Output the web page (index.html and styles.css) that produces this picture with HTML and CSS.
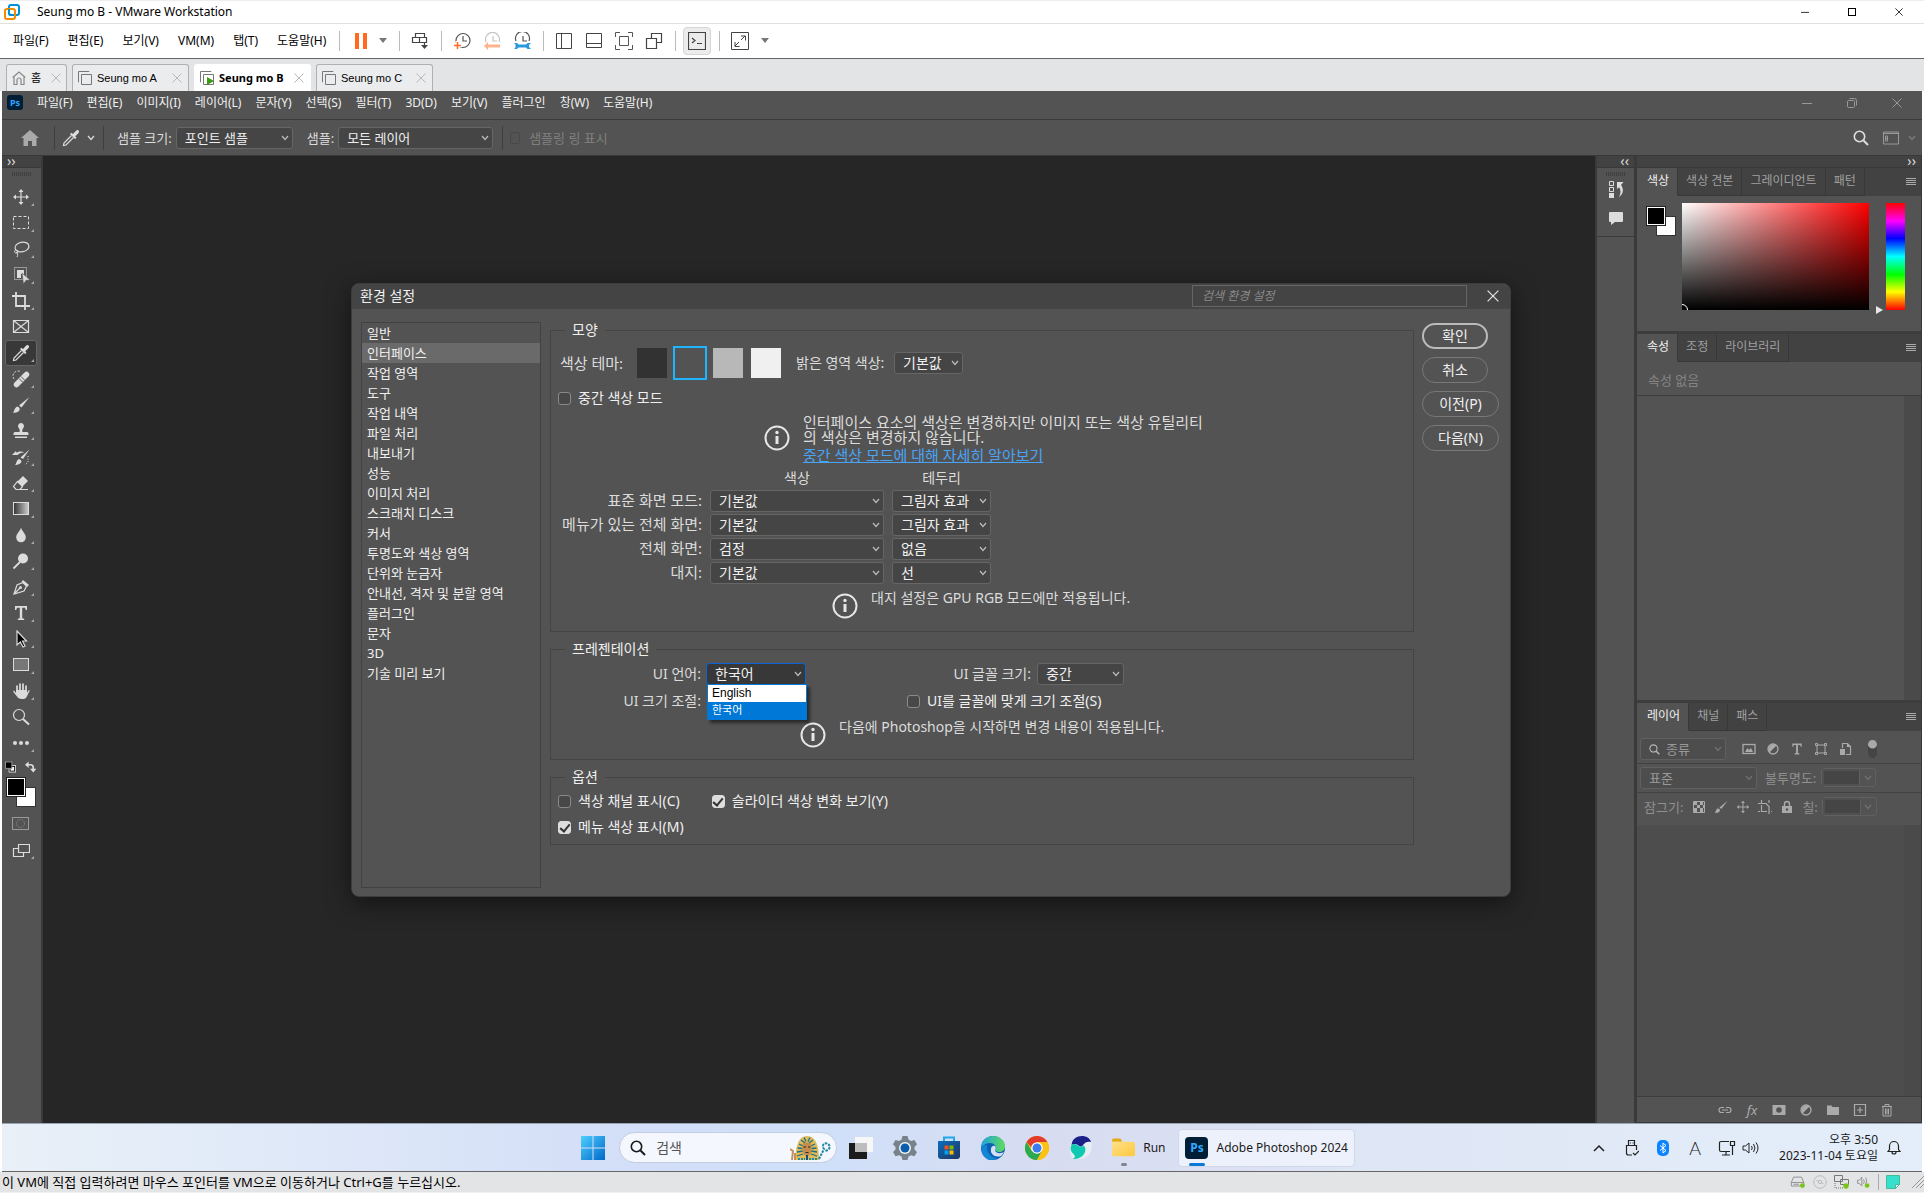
FILE: index.html
```html
<!DOCTYPE html>
<html lang="ko">
<head>
    <meta charset="utf-8">
    <title>Seung mo B - VMware Workstation</title>
    <link rel="stylesheet" href="styles.css">
</head>
<body>
    <!-- icon set -->
    <svg class="defs" aria-hidden="true">
        <defs>
            <linearGradient id="gWin" x1="0" y1="0" x2="1" y2="1"><stop offset="0" stop-color="#4fd0ff"/><stop offset="1" stop-color="#0067c8"/></linearGradient>
            <linearGradient id="gStore" x1="0" y1="0" x2="1" y2="1"><stop offset="0" stop-color="#0a6fc0"/><stop offset="1" stop-color="#20335f"/></linearGradient>
            <linearGradient id="gEdge" x1="0" y1="0" x2="1" y2="0"><stop offset="0" stop-color="#1fa3e0"/><stop offset="1" stop-color="#5fdc5a"/></linearGradient>
            <linearGradient id="gGray" x1="0" y1="0" x2="1" y2="0"><stop offset="0" stop-color="#333"/><stop offset="1" stop-color="#ccc"/></linearGradient>
            <linearGradient id="gFolder" x1="0" y1="0" x2="1" y2="1"><stop offset="0" stop-color="#ffe08a"/><stop offset="1" stop-color="#ffc83c"/></linearGradient>
        </defs>
        <symbol id="vmware" viewBox="0 0 16 16"><rect x="5" y="1" width="10" height="10" rx="2" fill="none" stroke="#0091da" stroke-width="2"/><rect x="1" y="5" width="10" height="10" rx="2" fill="none" stroke="#f38b00" stroke-width="2"/><path d="M5 5v4a2 2 0 0 0 2 2h3" fill="none" stroke="#0091da" stroke-width="2"/></symbol>
        <symbol id="x" viewBox="0 0 10 10"><path d="M.5.5l9 9M9.500.5l-9 9" fill="none" stroke="currentColor"/></symbol>
        <symbol id="min" viewBox="0 0 10 10"><path d="M0 5.500h10" stroke="currentColor"/></symbol>
        <symbol id="max" viewBox="0 0 10 10"><rect x="1.500" y="1.500" width="7" height="7" fill="none" stroke="currentColor"/></symbol>
        <symbol id="restore" viewBox="0 0 10 10"><rect x=".5" y="2.500" width="7" height="7" rx="1" fill="none" stroke="currentColor"/><path d="M2.500.5h5a2 2 0 0 1 2 2v5" fill="none" stroke="currentColor"/></symbol>
        <symbol id="caret" viewBox="0 0 8 5"><path d="M0 0h8L4 5z" fill="#777"/></symbol>
        <symbol id="chev" viewBox="0 0 8 6"><path d="M1 1l3 3.500L7 1" fill="none" stroke="currentColor" stroke-width="1.200"/></symbol>
        <symbol id="pause" viewBox="0 0 12 16"><path d="M0 0h4v16H0zM8 0h4v16H8z" fill="#ff6a1f"/></symbol>
        <symbol id="send" viewBox="0 0 18 18"><path d="M4.500 1.500h9v4h-9zM1.500 5.500h7v5h-7zM8.500 5.500h7v5h-7zM13.500 11v4" fill="none" stroke="#444" stroke-width="1.200"/><path d="M10 13h7l-3.500 4z" fill="#444"/></symbol>
        <symbol id="snap" viewBox="0 0 18 18"><circle cx="10" cy="8.500" r="7" fill="none" stroke="#555" stroke-width="1.200"/><path d="M10 4v5h4" fill="none" stroke="#555" stroke-width="1.200"/><path d="M4.500 9v9M0 13.500h9" stroke="#fff" stroke-width="3.500"/><path d="M4.500 10v7M1 13.500h7" stroke="#ff6a1f" stroke-width="1.500"/></symbol>
        <symbol id="revert" viewBox="0 0 18 18"><path d="M3 10a7 7 0 1 1 13 0M10 4v5h4" fill="none" stroke="#c4c4c4" stroke-width="1.200"/><path d="M1 14l4-4v2.500h12v3H5V18z" fill="#ffb38d"/></symbol>
        <symbol id="manage" viewBox="0 0 18 18"><path d="M3 9a7 7 0 1 1 13 0M10 4v5h4" fill="none" stroke="#555" stroke-width="1.200"/><path d="M1 11h3l1.500 1.500H13l1.500-1.500H18l-2 2v2l2 2h-3.500L13 15.500H5.500L4 17H1l1.500-1.500v-3z" fill="#2a98dd"/></symbol>
        <symbol id="side" viewBox="0 0 18 18"><path d="M1.500 1.500h15v15h-15zM6.500 1.500v15" fill="none" stroke="#444"/></symbol>
        <symbol id="thumbs" viewBox="0 0 18 18"><path d="M1.500 1.500h15v14h-15zM1.500 11.500h15" fill="none" stroke="#444"/></symbol>
        <symbol id="fit" viewBox="0 0 18 18"><path d="M.5 5V.5H5M13 .5h4.500V5M17.500 13v4.500H13M5 17.500H.5V13M4.500 4.500h9v9h-9z" fill="none" stroke="#555"/></symbol>
        <symbol id="unity" viewBox="0 0 18 18"><path d="M6.500 6V1.500h10v9H12M1.500 6.500h10v10h-10z" fill="none" stroke="#444" stroke-width="1.200"/></symbol>
        <symbol id="console" viewBox="0 0 18 18"><path d="M.5.5h17v17H.5zM4 6l3 2.500L4 11M9 11.500h5" fill="none" stroke="#444" stroke-width="1.200"/></symbol>
        <symbol id="expand" viewBox="0 0 18 18"><path d="M.5.5h17v17H.5zM10 4h4.500v4.500M4 10v4.500h4.500M14 4l-4 4M8 10l-4 4" fill="none" stroke="#444"/></symbol>
        <symbol id="house" viewBox="0 0 14 14"><path d="M.7 6.500L7 1l6.300 5.500M2 6v7.500h3V9a2 2 0 0 1 4 0v4.500h3V6" fill="none" stroke="#888" stroke-width="1.200"/></symbol>
        <symbol id="vm" viewBox="0 0 14 14"><path d="M3.500 3.500h10v10h-10zM1 11H.5V.5H11V1" fill="none" stroke="#777"/></symbol>
        <symbol id="vmrun" viewBox="0 0 14 14"><path d="M3.500 3.500h10v10h-10zM1 11H.5V.5H11V1" fill="none" stroke="#777"/><path d="M7 6l7 4-7 4z" fill="#3a9a10"/></symbol>
        <symbol id="home" viewBox="0 0 18 16"><path d="M9 0l9 8h-2.500v8H11v-5H7v5H2.500V8H0z" fill="#aaa"/></symbol>
        <symbol id="search" viewBox="0 0 16 16"><circle cx="6.500" cy="6.500" r="5.200" fill="none" stroke="currentColor" stroke-width="1.600"/><path d="M10.500 10.500l4.500 4.500" stroke="currentColor" stroke-width="2"/></symbol>
        <symbol id="work" viewBox="0 0 16 13"><path d="M.5.500h15v12H.5zM.5 2h15M2.500 4.500h2v5h-2zM2.500 7h2" fill="none" stroke="#999"/></symbol>
        <symbol id="menu" viewBox="0 0 10 8"><path d="M0 .5h10M0 2.500h10M0 4.500h10M0 6.500h10" stroke="#aaa"/></symbol>
        <!-- toolbox -->
        <symbol id="move" viewBox="0 0 18 18"><path d="M9 3v12M3 9h12" stroke="currentColor" stroke-width="1.200"/><path d="M9 1l2.500 3h-5zM9 17l2.500-3h-5zM1 9l3-2.500v5zM17 9l-3-2.500v5z" fill="currentColor"/></symbol>
        <symbol id="marquee" viewBox="0 0 18 18"><rect x="1.500" y="2.500" width="15" height="12" fill="none" stroke="currentColor" stroke-dasharray="3 2"/></symbol>
        <symbol id="lasso" viewBox="0 0 18 18"><ellipse cx="10" cy="7" rx="7" ry="4.800" transform="rotate(-12 10 7)" fill="none" stroke="currentColor" stroke-width="1.200"/><path d="M4 10c-2 0-2 3 0 3s3-2 1-3M4 12c2 1 2 3 1 5" fill="none" stroke="currentColor"/></symbol>
        <symbol id="objsel" viewBox="0 0 18 18"><rect x="2.500" y="1.500" width="12" height="12" fill="none" stroke="currentColor" stroke-dasharray="1 1"/><path d="M5 4h7v4H9v4H5z" fill="currentColor"/><path d="M10 7l8 7-4 .3L11.500 18z" fill="currentColor" stroke="#535353" stroke-width=".5"/></symbol>
        <symbol id="crop" viewBox="0 0 18 18"><path d="M4 0v14h14M0 4h13v14" fill="none" stroke="currentColor" stroke-width="1.800"/></symbol>
        <symbol id="frame" viewBox="0 0 18 18"><path d="M1.500 2.500h15v12h-15zM1.500 2.500l15 12M16.500 2.500l-15 12" fill="none" stroke="currentColor" stroke-width="1.200"/></symbol>
        <symbol id="dropper" viewBox="0 0 18 18"><path d="M9.500 6.500l-7.500 7.500-.5 2.500 2.500-.5 7.500-7.500" fill="none" stroke="currentColor" stroke-width="1.200"/><path d="M8 5l1.300-1.300L11 5l3-3.300c2-1.700 4 .6 2.600 2.400L13.300 7.300 14.500 9 13 10z" fill="currentColor"/></symbol>
        <symbol id="heal" viewBox="0 0 18 18"><path d="M2 9a5 5 0 0 1 7-7" fill="none" stroke="currentColor" stroke-dasharray="2 1.500"/><path d="M4.500 14.500l10-10" stroke="currentColor" stroke-width="5.500" stroke-linecap="round"/><path d="M7 8.500l3.500 3.500M9 6.500l3.500 3.500" stroke="#535353"/></symbol>
        <symbol id="brush" viewBox="0 0 18 18"><path d="M17.500 1L9.500 11.500 7 9.500zM1 16.500c1.500-1 1-3.500 3-5.200 2-1.500 4.500.8 3.500 3-1 2-4 2.800-6.500 2.200z" fill="currentColor"/></symbol>
        <symbol id="stamp" viewBox="0 0 18 18"><path d="M9 1a3.200 3.200 0 0 1 2 5.500c-.8.8-.8 2-.6 3.500H15a1.500 1.500 0 0 1 1.500 1.500V13h-15v-1.500A1.500 1.500 0 0 1 3 10h4.600c.2-1.500.2-2.700-.6-3.500A3.200 3.200 0 0 1 9 1zM3 14.500h12V16H3z" fill="currentColor"/></symbol>
        <symbol id="history" viewBox="0 0 18 18"><path d="M17.500 1.500L11 11 8.500 9.500zM3 17c1.500-1 1-3.500 3-5.500 2-1 4 .8 3.300 2.800C8 16.500 5 17.200 3 17zM0 7l4-4 .5 1.800c3-2 6-1.300 8-.3-2.500 0-5 .5-7 2.500z" fill="currentColor"/><path d="M16 8v6l-3 3" fill="none" stroke="currentColor" stroke-dasharray="1 1.500"/></symbol>
        <symbol id="eraser" viewBox="0 0 18 18"><path d="M11 2l5 5-5.500 5.500-5-5z" fill="currentColor"/><path d="M5.500 7.500l5 5-2.500 3H4l-2.500-3zM8 15.500h8" fill="none" stroke="currentColor" stroke-width="1.200"/></symbol>
        <symbol id="gradient" viewBox="0 0 18 18"><rect x="1.500" y="2.500" width="15" height="12" fill="url(#gGray)" stroke="currentColor"/></symbol>
        <symbol id="drop" viewBox="0 0 18 18"><path d="M9 1.500c1 4 4.800 6 4.800 10a4.800 4.800 0 0 1-9.600 0c0-4 3.800-6 4.800-10z" fill="currentColor"/></symbol>
        <symbol id="dodge" viewBox="0 0 18 18"><circle cx="11" cy="6.500" r="5" fill="currentColor"/><path d="M8 10l-6.500 6.500" stroke="currentColor" stroke-width="1.800"/></symbol>
        <symbol id="pen" viewBox="0 0 18 18"><path d="M2 16L5 7l6-2.500 3.500 3.500L12 13zM2 16l6-6" fill="none" stroke="currentColor" stroke-width="1.200"/><circle cx="8.500" cy="9.500" r="1.500" fill="currentColor"/><path d="M11 2l6 5-2 2-5.500-5z" fill="currentColor"/></symbol>
        <symbol id="type" viewBox="0 0 18 18"><path d="M3 2h12v4h-1.200l-.8-2.200h-2.800v10.400l2 .6V16H5.800v-1.200l2-.6V3.800H5L4.200 6H3z" fill="currentColor"/></symbol>
        <symbol id="pointer" viewBox="0 0 18 18"><path d="M5 1v14l3.300-3L11 17l2-1-2.500-5h4z" fill="#000" stroke="currentColor" stroke-width="1.200"/></symbol>
        <symbol id="rect" viewBox="0 0 18 18"><rect x="1.500" y="2.500" width="15" height="12" fill="#777" stroke="currentColor"/></symbol>
        <symbol id="hand" viewBox="0 0 18 18"><path d="M5 10V4M8 9V2M11 9V2M14 10V4" stroke="currentColor" stroke-width="1.700" stroke-linecap="round"/><path d="M4 8h10.800v3l2-3 1 .5-3 6C14 16.500 12.500 17 10 17c-3 0-4-1-5-2.500l-4-5 1-1L4 11z" fill="currentColor"/></symbol>
        <symbol id="zoom" viewBox="0 0 18 18"><circle cx="7" cy="7" r="5.500" fill="none" stroke="currentColor" stroke-width="1.200"/><path d="M11 11l6 5.500" stroke="currentColor" stroke-width="2"/></symbol>
        <symbol id="dots" viewBox="0 0 18 18"><circle cx="3" cy="9" r="2" fill="currentColor"/><circle cx="9" cy="9" r="2" fill="currentColor"/><circle cx="15" cy="9" r="2" fill="currentColor"/></symbol>
        <symbol id="mini" viewBox="0 0 12 12"><rect x="4.500" y="4.500" width="7" height="7" fill="#fff" stroke="#ddd"/><rect x="5.500" y="5.500" width="5" height="5" fill="#fff" stroke="#000"/><rect x=".5" y=".5" width="7" height="7" fill="#000" stroke="#999"/></symbol>
        <symbol id="swap" viewBox="0 0 12 12"><path d="M3 3.500h3a3 3 0 0 1 3 3V9" fill="none" stroke="currentColor" stroke-width="1.800"/><path d="M0 3.500L4 0v7zM5.500 8h7L9 12z" fill="currentColor"/></symbol>
        <symbol id="mask" viewBox="0 0 18 18"><rect x=".5" y="2.500" width="16" height="12" fill="none" stroke="#999"/><circle cx="8.500" cy="8.500" r="4" fill="none" stroke="#999" stroke-dasharray="1 1.500"/></symbol>
        <symbol id="screen" viewBox="0 0 18 18"><path d="M6.500 3.500h11v8h-11zM6 7.500H1.500v8h10V12" fill="none" stroke="currentColor" stroke-width="1.200"/></symbol>
        <symbol id="histpanel" viewBox="0 0 16 18"><path d="M1.500 1.500h4v4h-4zM1.500 7.500h4v4h-4z" fill="none" stroke="currentColor"/><path d="M1 13h5v5H1z" fill="currentColor"/><path d="M9 2h6.500L13 5c3 4 2.500 9-2 12 2-4 2-7 .2-9.800L9 9z" fill="currentColor"/></symbol>
        <symbol id="comment" viewBox="0 0 16 16"><path d="M2 2h12a1 1 0 0 1 1 1v8a1 1 0 0 1-1 1H7l-4 3v-3H2a1 1 0 0 1-1-1V3a1 1 0 0 1 1-1z" fill="currentColor"/></symbol>
        <!-- layers panel -->
        <symbol id="image" viewBox="0 0 14 14"><rect x="1" y="2.500" width="12" height="9" fill="none" stroke="currentColor" stroke-width="1.300"/><path d="M3 10l2.500-4L7 8l2-2 2 4z" fill="currentColor"/></symbol>
        <symbol id="adjust" viewBox="0 0 14 14"><circle cx="7" cy="7" r="5" fill="none" stroke="currentColor" stroke-width="1.300"/><path d="M3.500 10.500A5 5 0 0 1 10.500 3.500z" fill="currentColor"/></symbol>
        <symbol id="shape" viewBox="0 0 14 14"><path d="M3 3h8v8H3z" fill="none" stroke="currentColor"/><path d="M1.500 1.500h2v2h-2zM10.500 1.500h2v2h-2zM1.500 10.500h2v2h-2zM10.500 10.500h2v2h-2z" fill="#535353" stroke="currentColor"/></symbol>
        <symbol id="smart" viewBox="0 0 14 14"><path d="M4.500 6V1.500h5l3 3v8H8M9.500 1.500v3h3" fill="none" stroke="currentColor" stroke-width="1.200"/><path d="M2 7h5v6H2z" fill="currentColor"/></symbol>
        <symbol id="checker" viewBox="0 0 14 14"><path d="M1.500 1.500h11v11h-11z" fill="none" stroke="currentColor"/><path d="M2 2h3v3H2zM8 2h3v3H8zM5 5h3v3H5zM2 8h3v4H2zM8 8h3v4H8zM11 5h1.500v3H11z" fill="currentColor"/></symbol>
        <symbol id="board" viewBox="0 0 14 14"><path d="M3.500 0v3M0 3.500h8l3 3V14M3.500 5v6.500H9M0 11.500h2M13 11.500h1M11 0v3" fill="none" stroke="currentColor" stroke-width="1.200"/></symbol>
        <symbol id="lock" viewBox="0 0 14 14"><path d="M4.500 6V4a2.500 2.500 0 0 1 5 0v2" fill="none" stroke="currentColor" stroke-width="1.400"/><path d="M2 6h10v7H2z" fill="currentColor"/><circle cx="7" cy="9.500" r="1.200" fill="#535353"/></symbol>
        <symbol id="link" viewBox="0 0 14 14"><path d="M6 4.500H3.500a2.500 2.500 0 0 0 0 5H6M8 4.500h2.500a2.500 2.500 0 0 1 0 5H8M4 7h6" fill="none" stroke="currentColor" stroke-width="1.200"/></symbol>
        <symbol id="addmask" viewBox="0 0 14 14"><path d="M.5 2h13v10H.5z" fill="currentColor"/><circle cx="7" cy="7" r="2.800" fill="#535353"/></symbol>
        <symbol id="folder" viewBox="0 0 14 14"><path d="M1 2.500h4.500l1 1.500H13v8H1z" fill="currentColor"/></symbol>
        <symbol id="new" viewBox="0 0 14 14"><path d="M1.500 1.500h11v11h-11zM7 4v6M4 7h6" fill="none" stroke="currentColor" stroke-width="1.200"/></symbol>
        <symbol id="trash" viewBox="0 0 14 14"><path d="M2 3.500h10M5 3V1.500h4V3M3 4v9h8V4M5.500 5.500v6M8.500 5.500v6M7 5.500v6" fill="none" stroke="currentColor"/></symbol>
        <symbol id="info" viewBox="0 0 26 26"><circle cx="13" cy="13" r="11.500" fill="none" stroke="#e6e6e6" stroke-width="2"/><path d="M11.500 11h3v8h-3z" fill="#e6e6e6"/><circle cx="13" cy="7.500" r="1.700" fill="#e6e6e6"/></symbol>
        <!-- taskbar -->
        <symbol id="win" viewBox="0 0 24 24"><path d="M0 0h11.500v11.500H0zM12.500 0H24v11.500H12.500zM0 12.500h11.500V24H0zM12.500 12.500H24V24H12.500z" fill="url(#gWin)"/></symbol>
        <symbol id="pharaoh" viewBox="0 0 42 26"><path d="M5 25C6 9 9 1 17 1s12 8 12 24z" fill="#e0bc58"/><path d="M7 21l6-2M7 17l6-1M7.500 13l5 .5M9 9l4 2M11 5l4 3M14 2.500l2 4M20 2.500l-2 4M23 5l-4 3M25 9l-4 2M26.500 13l-5 .5M27 17l-6-1M27 21l-6-2" stroke="#1d6f86" stroke-width="1.300"/><path d="M12.500 9c2.500-2 6.500-2 9 0v6c0 4-2.500 6-4.500 6s-4.500-2-4.500-6z" fill="#c58d4c"/><path d="M13.500 12h2.500M18 12h2.500M15.500 17.500h3" stroke="#2b2a33" stroke-width="1.200"/><path d="M16 20h2v5h-2z" fill="#174a7d"/><path d="M8 24h7M19 24h8" stroke="#1e8ba3" stroke-width="2" stroke-dasharray="2 1"/><path d="M2 25l1-9-3-2M5 25v-7" fill="none" stroke="#c3915c" stroke-width="2"/><path d="M29 24l5-10c-3-4 1-7 4-5s2 6-3 7" fill="none" stroke="#2088a0" stroke-width="2" stroke-dasharray="2.500 1"/></symbol>
        <symbol id="taskview" viewBox="0 0 24 24"><path d="M0 7h18v16H0z" fill="#1c1c1c"/><path d="M6 1h18v15H6z" fill="#f7f7f7"/><path d="M6 7h12v9H6z" fill="#bdbdbd"/></symbol>
        <symbol id="gear" viewBox="0 0 24 24"><path d="M9.500 0h5l1 3.500 2.500 1.400 3.500-1L24 8.200 21.500 11v2.500L24 16l-2.500 4.200-3.500-1-2.500 1.400-1 3.400h-5l-1-3.400L6 19.200l-3.500 1L0 16l2.500-2.500V11L0 8.200l2.500-4.300 3.500 1 2.500-1.400z" fill="#78828a"/><circle cx="12" cy="12" r="6" fill="#eef3f8"/><circle cx="12" cy="12" r="4.500" fill="#0a5cad"/></symbol>
        <symbol id="store" viewBox="0 0 24 24"><path d="M7 6V1.500h10V6" fill="none" stroke="#1fa9ea" stroke-width="2"/><path d="M1 5h22v15a3 3 0 0 1-3 3H4a3 3 0 0 1-3-3z" fill="url(#gStore)"/><path d="M7.500 9.500h4v4h-4z" fill="#f25022"/><path d="M12.500 9.500h4v4h-4z" fill="#7fba00"/><path d="M7.500 14.500h4v4h-4z" fill="#00a4ef"/><path d="M12.500 14.500h4v4h-4z" fill="#ffb900"/></symbol>
        <symbol id="edge" viewBox="0 0 24 24"><circle cx="12" cy="12" r="12" fill="#0b62b5"/><path d="M0 12C0 5 5 0 12 0s12 5 12 10c0 4-3 6-6 6-2 0-4-1-3.500-2.500C16 10 13 7 9 7c-4 0-7 2-9 5z" fill="url(#gEdge)"/><path d="M8 24C-1 20-2 9 6 9c-1 5 2 13 10 13-3 2-5 2-8 2z" fill="#1487d4"/><path d="M14 10c2 3-1 4 1 6 3 2 6 1 8 0-1 2-2 3-3 4-6 2-11-2-10-7 0-2 2-4 4-3z" fill="#d6def4"/></symbol>
        <symbol id="chrome" viewBox="0 0 24 24"><circle cx="12" cy="12" r="12" fill="#fbc116"/><path d="M1.600 6a12 12 0 0 1 20.800 0H12v12z" fill="#e33b2e"/><path d="M1.600 6A12 12 0 0 0 12 24l5.200-9H6.800z" fill="#2da94f"/><path d="M12 6h10.400A12 12 0 0 1 12 24l5-9z" fill="#fbc116"/><circle cx="12" cy="12" r="5.800" fill="#fff"/><circle cx="12" cy="12" r="4.500" fill="#3b7ded"/></symbol>
        <symbol id="whale" viewBox="0 0 24 24"><path d="M2 6C8 1 20 3 22 6c3 8-2 17-12 17H4C0 18 1 11 2 6z" fill="#e6eef2"/><path d="M2.500 9C3 3 8 0 13 0c4 0 8 2 9 6-3-1-6 0-8 3-1 2-3 2-5 0-2-1.500-4-1.500-6.500 0z" fill="#1b1f8a"/><path d="M2.500 9c3-2 5-1 7 1 2 1.500 4 1 5-.5 1.500 1 3 4 1 7.500-2 4-6 6-12 6 3-1 3-3 1-5C1.500 15.500 1 12 2.500 9z" fill="#10c9b2"/></symbol>
        <symbol id="explorer" viewBox="0 0 22 20"><path d="M0 3a2 2 0 0 1 2-2h6l2 3H0z" fill="#e8a90c"/><path d="M0 4h20a2 2 0 0 1 2 2v10a2 2 0 0 1-2 2H2a2 2 0 0 1-2-2z" fill="url(#gFolder)"/></symbol>
        <symbol id="up" viewBox="0 0 12 8"><path d="M1 7l5-5 5 5" fill="none" stroke="#222" stroke-width="1.500"/></symbol>
        <symbol id="usb" viewBox="0 0 14 18"><path d="M3.500 6V1.500h6V6M1.500 6.500h10V11M1.500 6v8a2 2 0 0 0 2 2H7M5 4h1M7.500 4h1M8 14l2 2 4-4" fill="none" stroke="#222" stroke-width="1.200"/></symbol>
        <symbol id="bt" viewBox="0 0 12 16"><rect width="12" height="16" rx="5" fill="#0a84ff"/><path d="M3 5.500l6 5-3 2.500V3l3 2.500-6 5" fill="none" stroke="#fff"/></symbol>
        <symbol id="net" viewBox="0 0 18 16"><path d="M11 1.500H3a1.500 1.500 0 0 0-1.500 1.500v7A1.500 1.500 0 0 0 3 11.500h9M8 12v3M4 15h8M12.500 1.500h4v4h-4zM14.500 6v9" fill="none" stroke="#222" stroke-width="1.200"/></symbol>
        <symbol id="vol" viewBox="0 0 18 14"><path d="M1 5h2.500L7 2v10L3.500 9H1z" fill="none" stroke="#222"/><path d="M9.500 5q1.500 2 0 4M11.500 3q3 4 0 8M14 1.500q4 5.500 0 11" fill="none" stroke="#222"/></symbol>
        <symbol id="bell" viewBox="0 0 14 16"><path d="M1 11.500l1.500-2V6a4.500 4.500 0 0 1 9 0v3.500l1.500 2zM5 12a2 2 0 0 0 4 0" fill="none" stroke="#222" stroke-width="1.200"/></symbol>
        <symbol id="disk" viewBox="0 0 18 14"><path d="M1.500 7.500L4 1.500h9l2.500 6v4h-14zM1.500 7.500h14M4 9.500h6" fill="none" stroke="#888"/><circle cx="14" cy="11" r="2.700" fill="#79c516"/></symbol>
        <symbol id="cd" viewBox="0 0 14 14"><circle cx="7" cy="7" r="6.300" fill="none" stroke="#bbb"/><circle cx="7" cy="7" r="1.700" fill="none" stroke="#bbb"/><path d="M3.500 5.500l2 .7M8.500 8l2 .7" stroke="#bbb"/></symbol>
        <symbol id="lan" viewBox="0 0 16 14"><path d="M.5.500h8v6h-8zM6.500 4.500h8v5h-8z" fill="#e3e4e6" stroke="#777"/><path d="M1 8v5h9" fill="none" stroke="#777" stroke-dasharray="1 1"/><circle cx="12" cy="11" r="2.700" fill="#79c516"/></symbol>
        <symbol id="snd" viewBox="0 0 16 14"><path d="M.5 5h2l3-3.500v10l-3-3h-2zM7.500 4q1.500 2.500 0 5M10 2q2 4 0 7" fill="none" stroke="#888"/><circle cx="11.500" cy="11" r="2.700" fill="#79c516"/></symbol>
        <symbol id="note" viewBox="0 0 14 14"><path d="M.5.500h13v9l-4 4h-9z" fill="#35e0cd" stroke="#4b9"/><path d="M13.500 9.500h-4v4z" fill="#fff" stroke="#4b9"/></symbol>
        <symbol id="grip" viewBox="0 0 12 12"><path d="M0 12L12 0M4 12l8-8M8 12l4-4" stroke="#999"/></symbol>
    </svg>

    <header class="titlebar">
        <svg class="i16"><use href="#vmware"/></svg>
        <span class="caption">Seung mo B - VMware Workstation</span>
        <button class="winbtn" aria-label="최소화"><svg class="i8"><use href="#min"/></svg></button>
        <button class="winbtn" aria-label="최대화"><svg class="i10"><use href="#max"/></svg></button>
        <button class="winbtn" aria-label="닫기"><svg class="i8"><use href="#x"/></svg></button>
    </header>

    <nav class="vmbar">
        <div class="vmmenu">
            <a href="#">파일(F)</a><a href="#">편집(E)</a><a href="#">보기(V)</a><a href="#">VM(M)</a><a href="#">탭(T)</a><a href="#">도움말(H)</a>
        </div>
        <div class="vmgroup"><svg class="pause"><use href="#pause"/></svg><svg class="caret"><use href="#caret"/></svg></div>
        <div class="vmgroup"><svg class="i18"><use href="#send"/></svg></div>
        <div class="vmgroup"><svg class="i18"><use href="#snap"/></svg><svg class="i18"><use href="#revert"/></svg><svg class="i18"><use href="#manage"/></svg></div>
        <div class="vmgroup"><svg class="i18"><use href="#side"/></svg><svg class="i18"><use href="#thumbs"/></svg><svg class="i18"><use href="#fit"/></svg><svg class="i18"><use href="#unity"/></svg></div>
        <div class="vmgroup tight"><button class="console" aria-label="콘솔"><svg class="i18"><use href="#console"/></svg></button></div>
        <div class="vmgroup"><svg class="i18"><use href="#expand"/></svg><svg class="caret"><use href="#caret"/></svg></div>
    </nav>

    <nav class="vmtabs">
        <a href="#" class="vmtab home"><svg class="i14"><use href="#house"/></svg><span>홈</span><svg class="i10"><use href="#x"/></svg></a>
        <a href="#" class="vmtab"><svg class="i14"><use href="#vm"/></svg><span>Seung mo A</span><svg class="i10"><use href="#x"/></svg></a>
        <a href="#" class="vmtab active"><svg class="i14"><use href="#vmrun"/></svg><span>Seung mo B</span><svg class="i10"><use href="#x"/></svg></a>
        <a href="#" class="vmtab"><svg class="i14"><use href="#vm"/></svg><span>Seung mo C</span><svg class="i10"><use href="#x"/></svg></a>
    </nav>

    <main class="guest">
        <div class="psmenu">
            <span class="pslogo">Ps</span>
            <a href="#">파일(F)</a><a href="#">편집(E)</a><a href="#">이미지(I)</a><a href="#">레이어(L)</a><a href="#">문자(Y)</a><a href="#">선택(S)</a><a href="#">필터(T)</a><a href="#">3D(D)</a><a href="#">보기(V)</a><a href="#">플러그인</a><a href="#">창(W)</a><a href="#">도움말(H)</a>
            <div class="pswin">
                <svg class="i10"><use href="#min"/></svg><svg class="i10"><use href="#restore"/></svg><svg class="i10"><use href="#x"/></svg>
            </div>
        </div>

        <div class="options">
            <div class="optgroup first"><svg class="i18"><use href="#home"/></svg></div>
            <div class="optgroup"><svg class="i18"><use href="#dropper"/></svg><svg class="chev"><use href="#chev"/></svg></div>
            <div class="optgroup">
                <label for="sampleSize">샘플 크기:</label>
                <span class="sel w117"><select id="sampleSize"><option>포인트 샘플</option></select><svg><use href="#chev"/></svg></span>
                <label for="sample" class="second">샘플:</label>
                <span class="sel w155"><select id="sample"><option>모든 레이어</option></select><svg><use href="#chev"/></svg></span>
            </div>
            <label class="ring"><input type="checkbox" disabled>샘플링 링 표시</label>
            <div class="optright"><svg class="i16 mag"><use href="#search"/></svg><svg class="i16"><use href="#work"/></svg><svg class="chev dim"><use href="#chev"/></svg></div>
        </div>

        <div class="workspace">
            <aside class="toolbox">
                <div class="strip">››</div>
                <div class="grip"></div>
                <button class="tool"><svg><use href="#move"/></svg></button>
                <button class="tool"><svg><use href="#marquee"/></svg></button>
                <button class="tool"><svg><use href="#lasso"/></svg></button>
                <button class="tool"><svg><use href="#objsel"/></svg></button>
                <button class="tool"><svg><use href="#crop"/></svg></button>
                <button class="tool single"><svg><use href="#frame"/></svg></button>
                <button class="tool on"><svg><use href="#dropper"/></svg></button>
                <button class="tool"><svg><use href="#heal"/></svg></button>
                <button class="tool"><svg><use href="#brush"/></svg></button>
                <button class="tool"><svg><use href="#stamp"/></svg></button>
                <button class="tool"><svg><use href="#history"/></svg></button>
                <button class="tool"><svg><use href="#eraser"/></svg></button>
                <button class="tool"><svg><use href="#gradient"/></svg></button>
                <button class="tool"><svg><use href="#drop"/></svg></button>
                <button class="tool"><svg><use href="#dodge"/></svg></button>
                <button class="tool"><svg><use href="#pen"/></svg></button>
                <button class="tool"><svg><use href="#type"/></svg></button>
                <button class="tool"><svg><use href="#pointer"/></svg></button>
                <button class="tool"><svg><use href="#rect"/></svg></button>
                <button class="tool"><svg><use href="#hand"/></svg></button>
                <button class="tool single"><svg><use href="#zoom"/></svg></button>
                <button class="tool"><svg><use href="#dots"/></svg></button>
                <div class="minirow"><svg><use href="#mini"/></svg><svg><use href="#swap"/></svg></div>
                <div class="swatch"><i class="bg"></i><i class="fg"></i></div>
                <button class="tool single"><svg><use href="#mask"/></svg></button>
                <button class="tool"><svg><use href="#screen"/></svg></button>
            </aside>

            <section class="canvas"></section>

            <aside class="iconcol">
                <div class="strip right">‹‹</div>
                <div class="iconbox">
                    <div class="grip"></div>
                    <svg class="i18"><use href="#histpanel"/></svg>
                    <svg class="i16"><use href="#comment"/></svg>
                </div>
            </aside>

            <aside class="panels">
                <div class="strip right">››</div>
                <section class="panel color">
                    <div class="ptabs"><a href="#" class="on">색상</a><a href="#">색상 견본</a><a href="#">그레이디언트</a><a href="#">패턴</a><svg><use href="#menu"/></svg></div>
                    <div class="picker">
                        <div class="swatch"><i class="bg"></i><i class="fg"></i></div>
                        <div class="field"><i></i></div>
                        <div class="hue"></div>
                    </div>
                </section>
                <section class="panel props">
                    <div class="ptabs"><a href="#" class="on">속성</a><a href="#">조정</a><a href="#">라이브러리</a><svg><use href="#menu"/></svg></div>
                    <p class="none">속성 없음</p>
                    <div class="scroll"></div>
                </section>
                <section class="panel layers">
                    <div class="ptabs"><a href="#" class="on">레이어</a><a href="#">채널</a><a href="#">패스</a><svg><use href="#menu"/></svg></div>
                    <div class="lrow filter">
                        <span class="sel off w86"><svg class="mag"><use href="#search"/></svg><select aria-label="필터" disabled><option>종류</option></select><svg><use href="#chev"/></svg></span>
                        <div class="licons"><svg><use href="#image"/></svg><svg><use href="#adjust"/></svg><svg><use href="#type"/></svg><svg><use href="#shape"/></svg><svg><use href="#smart"/></svg></div>
                        <span class="toggle"></span>
                    </div>
                    <div class="lrow blend">
                        <span class="sel off w117"><select aria-label="혼합 모드" disabled><option>표준</option></select><svg><use href="#chev"/></svg></span>
                        <label for="opacity">불투명도:</label>
                        <span class="num"><input id="opacity" type="text" disabled><svg><use href="#chev"/></svg></span>
                    </div>
                    <div class="lrow locks">
                        <span>잠그기:</span>
                        <div class="licons tight"><svg><use href="#checker"/></svg><svg><use href="#brush"/></svg><svg><use href="#move"/></svg><svg><use href="#board"/></svg><svg><use href="#lock"/></svg></div>
                        <label for="fill">칠:</label>
                        <span class="num"><input id="fill" type="text" disabled><svg><use href="#chev"/></svg></span>
                    </div>
                    <div class="scroll"></div>
                    <div class="lfoot"><svg><use href="#link"/></svg><em>fx</em><svg><use href="#addmask"/></svg><svg><use href="#adjust"/></svg><svg><use href="#folder"/></svg><svg><use href="#new"/></svg><svg><use href="#trash"/></svg></div>
                </section>
            </aside>
        </div>

        <!-- preferences window -->
        <form class="dialog">
            <div class="dtitle">
                <h1>환경 설정</h1>
                <input type="text" class="dsearch" placeholder="검색 환경 설정" aria-label="검색 환경 설정">
                <button type="button" class="dclose" aria-label="닫기"><svg class="i12"><use href="#x"/></svg></button>
            </div>
            <div class="dbody">
                <ul class="cats">
                    <li>일반</li><li class="on">인터페이스</li><li>작업 영역</li><li>도구</li><li>작업 내역</li><li>파일 처리</li><li>내보내기</li><li>성능</li><li>이미지 처리</li><li>스크래치 디스크</li><li>커서</li><li>투명도와 색상 영역</li><li>단위와 눈금자</li><li>안내선, 격자 및 분할 영역</li><li>플러그인</li><li>문자</li><li>3D</li><li>기술 미리 보기</li>
                </ul>
                <div class="sections">
                    <fieldset class="look">
                        <legend>모양</legend>
                        <div class="themes">
                            <span>색상 테마:</span>
                            <div class="chips">
                                <button type="button" class="chip c1" aria-label="검정"></button><button type="button" class="chip c2 on" aria-label="진한 회색"></button><button type="button" class="chip c3" aria-label="회색"></button><button type="button" class="chip c4" aria-label="밝은 회색"></button>
                            </div>
                            <label for="highlight">밝은 영역 색상:</label>
                            <span class="sel w69"><select id="highlight"><option>기본값</option></select><svg><use href="#chev"/></svg></span>
                        </div>
                        <label class="check neutral"><input type="checkbox">중간 색상 모드</label>
                        <div class="about">
                            <svg class="i26"><use href="#info"/></svg>
                            <p>인터페이스 요소의 색상은 변경하지만 이미지 또는 색상 유틸리티<br>의 색상은 변경하지 않습니다.<a href="#">중간 색상 모드에 대해 자세히 알아보기</a></p>
                        </div>
                        <div class="modes">
                            <span></span><span class="colhead">색상</span><span class="colhead">테두리</span>
                            <label for="m1">표준 화면 모드:</label>
                            <span class="sel"><select id="m1"><option>기본값</option></select><svg><use href="#chev"/></svg></span>
                            <span class="sel"><select aria-label="테두리"><option>그림자 효과</option></select><svg><use href="#chev"/></svg></span>
                            <label for="m2">메뉴가 있는 전체 화면:</label>
                            <span class="sel"><select id="m2"><option>기본값</option></select><svg><use href="#chev"/></svg></span>
                            <span class="sel"><select aria-label="테두리"><option>그림자 효과</option></select><svg><use href="#chev"/></svg></span>
                            <label for="m3">전체 화면:</label>
                            <span class="sel"><select id="m3"><option>검정</option></select><svg><use href="#chev"/></svg></span>
                            <span class="sel"><select aria-label="테두리"><option>없음</option></select><svg><use href="#chev"/></svg></span>
                            <label for="m4">대지:</label>
                            <span class="sel"><select id="m4"><option>기본값</option></select><svg><use href="#chev"/></svg></span>
                            <span class="sel"><select aria-label="테두리"><option>선</option></select><svg><use href="#chev"/></svg></span>
                        </div>
                        <div class="note n1"><svg class="i26"><use href="#info"/></svg><p>대지 설정은 GPU RGB 모드에만 적용됩니다.</p></div>
                    </fieldset>

                    <fieldset class="present">
                        <legend>프레젠테이션</legend>
                        <div class="pgrid">
                            <label for="lang">UI 언어:</label>
                            <span class="sel w100 open"><select id="lang"><option>한국어</option></select><svg><use href="#chev"/></svg>
                                <ul class="drop" role="listbox"><li role="option">English</li><li role="option" class="on">한국어</li></ul>
                            </span>
                            <label for="fsize">UI 글꼴 크기:</label>
                            <span class="sel w87"><select id="fsize"><option>중간</option></select><svg><use href="#chev"/></svg></span>
                        </div>
                        <div class="pgrid second">
                            <label>UI 크기 조절:</label>
                            <label class="check fit"><input type="checkbox">UI를 글꼴에 맞게 크기 조절(S)</label>
                        </div>
                        <div class="note n2"><svg class="i26"><use href="#info"/></svg><p>다음에 Photoshop을 시작하면 변경 내용이 적용됩니다.</p></div>
                    </fieldset>

                    <fieldset class="opts">
                        <legend>옵션</legend>
                        <div class="crow">
                            <label class="check"><input type="checkbox">색상 채널 표시(C)</label>
                            <label class="check"><input type="checkbox" checked>슬라이더 색상 변화 보기(Y)</label>
                        </div>
                        <div class="crow">
                            <label class="check"><input type="checkbox" checked>메뉴 색상 표시(M)</label>
                        </div>
                    </fieldset>
                </div>
                <div class="actions">
                    <button type="button" class="pill primary">확인</button>
                    <button type="button" class="pill">취소</button>
                    <button type="button" class="pill wide">이전(P)</button>
                    <button type="button" class="pill wide">다음(N)</button>
                </div>
            </div>
        </form>
    </main>

    <footer class="taskbar">
        <div class="apps">
            <svg class="i24"><use href="#win"/></svg>
            <label class="tsearch"><svg class="i16"><use href="#search"/></svg><input type="text" placeholder="검색" aria-label="검색"><svg class="pharaoh"><use href="#pharaoh"/></svg></label>
            <div class="pinned">
                <svg class="i24"><use href="#taskview"/></svg><svg class="i24"><use href="#gear"/></svg><svg class="i24"><use href="#store"/></svg><svg class="i24"><use href="#edge"/></svg><svg class="i24"><use href="#chrome"/></svg><svg class="i24"><use href="#whale"/></svg>
            </div>
            <button class="task run"><svg><use href="#explorer"/></svg>Run</button>
            <button class="task active"><span class="pslogo big">Ps</span>Adobe Photoshop 2024</button>
        </div>
        <div class="tray">
            <svg class="t12"><use href="#up"/></svg>
            <svg class="t14"><use href="#usb"/></svg>
            <svg class="t12"><use href="#bt"/></svg>
            <span class="ime">A</span>
            <svg class="t18"><use href="#net"/></svg><svg class="t18 v"><use href="#vol"/></svg>
            <div class="clock">오후 3:50<br>2023-11-04 토요일</div>
            <svg class="t14 b"><use href="#bell"/></svg>
        </div>
    </footer>

    <footer class="status">
        <span>이 VM에 직접 입력하려면 마우스 포인터를 VM으로 이동하거나 Ctrl+G를 누르십시오.</span>
        <div class="devices"><svg class="i16"><use href="#disk"/></svg><svg class="i14"><use href="#cd"/></svg><svg class="i16"><use href="#lan"/></svg><svg class="i14"><use href="#snd"/></svg><i></i><svg class="i14"><use href="#note"/></svg><svg class="i12 g"><use href="#grip"/></svg></div>
    </footer>
</body>
</html>
```
FILE: styles.css
```css
* {
    box-sizing: border-box;
}

body {
    margin: 0;
    height: 100vh;
    display: flex;
    flex-direction: column;
    overflow: hidden;
    font-family: "Noto Sans", "Noto Sans CJK KR", sans-serif;
    font-size: 12px;
    line-height: 16px;
    color: #000;
    background: #fff;
}

a {
    color: inherit;
    text-decoration: none;
}

button, input, select {
    font: inherit;
    color: inherit;
    margin: 0;
    padding: 0;
    border: 0;
    background: none;
}

ul, p, h1 {
    margin: 0;
    padding: 0;
    list-style: none;
}

svg {
    display: block;
    flex: none;
}

.defs {
    position: absolute;
    width: 0;
    height: 0;
}

.i8 { width: 8px; height: 8px; }
.i10 { width: 10px; height: 10px; }
.i12 { width: 12px; height: 12px; }
.i14 { width: 14px; height: 14px; }
.i16 { width: 16px; height: 16px; }
.i18 { width: 18px; height: 18px; }
.i24 { width: 24px; height: 24px; }
.i26 { width: 26px; height: 26px; }
.caret { width: 8px; height: 5px; }
.chev { width: 8px; height: 6px; }
.dim { opacity: .3; }

/* vmware window */
.titlebar {
    display: flex;
    align-items: center;
    height: 24px;
    padding: 0 2px 0 4px;
    border-top: 1px solid #eee;
    border-bottom: 1px solid #e0e0e0;
}

.caption {
    flex: 1;
    margin-left: 17px;
}

.winbtn {
    display: flex;
    justify-content: center;
    width: 47px;
}

.vmbar {
    display: flex;
    align-items: center;
    height: 35px;
    padding-bottom: 1px;
    border-bottom: 1px solid #666;
}

.vmmenu {
    display: flex;
    gap: 19px;
    padding-left: 13px;
    margin-right: 13px;
}

.vmgroup {
    display: flex;
    align-items: center;
    gap: 12px;
    position: relative;
    padding: 0 12px;
}

.vmgroup::before {
    content: "";
    position: absolute;
    left: 0;
    width: 1px;
    height: 20px;
    background: #bbb;
}

.vmgroup.tight {
    padding: 0 8px;
}

.vmgroup:nth-child(2) {
    padding: 0 12px 0 16px;
}

.pause { width: 12px; height: 16px; }

.console {
    padding: 4px;
    border: 1px solid #d5d5d5;
    border-radius: 4px;
    background: #ececec;
}

.vmtabs {
    display: flex;
    align-items: flex-end;
    gap: 5px;
    height: 32px;
    padding-left: 6px;
    background: #e3e4e6;
}

.vmtab {
    display: flex;
    align-items: center;
    gap: 5px;
    width: 117px;
    height: 27px;
    padding: 0 6px 0 5px;
    border: 1px solid #b0b0b0;
    border-bottom: 0;
    border-radius: 3px 3px 0 0;
    font-family: "Liberation Sans", "Noto Sans CJK KR", sans-serif;
    font-size: 11px;
    background: #ebecee;
}

.vmtab span {
    flex: 1;
    white-space: nowrap;
}

.vmtab .i10 {
    color: #b8b8b8;
}

.vmtab.home {
    width: 61px;
    padding: 0 5px;
}

.vmtab.active {
    font-family: "Noto Sans", sans-serif;
    font-weight: bold;
    border-color: #fff;
    background: #fff;
}

/* photoshop */
.guest {
    flex: 1;
    min-height: 0;
    display: flex;
    flex-direction: column;
    position: relative;
    margin: 0 2px;
    color: #ddd;
    background: #535353;
}

.psmenu {
    display: flex;
    align-items: center;
    gap: 14px;
    height: 29px;
    padding: 0 20px 5px 5px;
    border-bottom: 1px solid #3a3a3a;
    color: #f0f0f0;
}

.pslogo {
    width: 16px;
    height: 15px;
    border-radius: 3px;
    font-size: 9px;
    font-weight: bold;
    line-height: 15px;
    text-align: center;
    color: #31a8ff;
    background: #001e36;
}

.pslogo.big {
    width: 23px;
    height: 22px;
    border-radius: 4px;
    font-size: 12px;
    line-height: 21px;
}

.pswin {
    display: flex;
    gap: 35px;
    margin-left: auto;
    color: #999;
}

.options {
    display: flex;
    align-items: center;
    height: 36px;
    border-bottom: 1px solid #383838;
    font-size: 13px;
}

.optgroup {
    display: flex;
    align-items: center;
    height: 24px;
    padding: 0 9px 0 7px;
    border-right: 1px solid #3f3f3f;
}

.optgroup.first {
    padding: 0 15px 0 19px;
}

.optgroup:nth-child(2) {
    gap: 7px;
    padding: 0 8px 0 7px;
}

.optgroup label {
    padding: 0 4px 0 6px;
}

.optgroup .second {
    padding-left: 14px;
}

.ring {
    display: flex;
    align-items: center;
    gap: 9px;
    margin-left: 7px;
    color: #808080;
}

.ring input {
    appearance: none;
    width: 10px;
    height: 12px;
    border: 1px solid #484848;
    border-radius: 2px;
}

.optright {
    display: flex;
    align-items: center;
    gap: 9px;
    margin-left: auto;
    padding-right: 6px;
}

.optright .mag {
    margin-right: 5px;
}

.sel {
    display: flex;
    align-items: center;
    position: relative;
    height: 22px;
    border: 1px solid #666;
    border-radius: 3px;
    color: #f0f0f0;
    background: #454545;
}

.sel select {
    appearance: none;
    flex: 1;
    min-width: 0;
    height: 20px;
    padding-left: 8px;
    outline: 0;
}

.sel svg {
    width: 8px;
    height: 6px;
    margin-right: 3px;
    color: #bbb;
    pointer-events: none;
}

.w69 { width: 69px; }
.w86 { width: 86px; }
.w87 { width: 87px; }
.w100 { width: 100px; }
.w117 { width: 117px; }
.w155 { width: 155px; }

.sel.off {
    border-color: #606060;
    color: #999;
    background: #4d4d4d;
}

.sel.off select {
    opacity: 1;
}

.sel.off svg {
    color: #707070;
}

.sel.off .mag {
    width: 11px;
    height: 11px;
    margin: 0 -2px 0 8px;
    color: #bbb;
}

.workspace {
    flex: 1;
    min-height: 0;
    display: flex;
}

.strip {
    height: 12px;
    padding: 0 5px;
    border-bottom: 1px solid #383838;
    font-size: 14px;
    line-height: 9px;
    color: #ddd;
    background: #424242;
}

.strip.right {
    text-align: right;
}

.grip {
    width: 19px;
    height: 4px;
    margin: 4px auto;
    background: repeating-linear-gradient(90deg, #3e3e3e 0 1px, #535353 1px 2px);
}

.toolbox {
    width: 41px;
    border-right: 2px solid #3a3a3a;
}

.toolbox .grip {
    margin: 4px auto 8px;
}

.tool {
    display: flex;
    align-items: center;
    justify-content: center;
    position: relative;
    width: 32px;
    height: 26px;
    margin-left: 3px;
    color: #dcdcdc;
}

.tool svg {
    width: 18px;
    height: 18px;
}

.tool::after {
    content: "";
    position: absolute;
    right: 3px;
    bottom: 4px;
    border-left: 3px solid transparent;
    border-bottom: 3px solid #aaa;
}

.tool.single::after {
    display: none;
}

.tool.on {
    border: 1px solid #666;
    border-radius: 3px;
    background: #383838;
}

.tool.on::after {
    right: 2px;
    bottom: 3px;
}

.minirow {
    display: flex;
    justify-content: space-between;
    padding: 5px 5px 4px 3px;
}

.minirow svg {
    width: 11px;
    height: 12px;
}

.swatch {
    position: relative;
    width: 30px;
    height: 30px;
    margin: 0 0 4px 4px;
}

.swatch i {
    position: absolute;
    width: 20px;
    height: 20px;
}

.swatch .fg {
    left: 0;
    top: 0;
    background: #000;
    border: 1px solid #222;
    box-shadow: inset 0 0 0 1px #fff;
}

.swatch .bg {
    right: 0;
    bottom: 0;
    background: #fff;
    border: 1px solid #333;
}

.canvas {
    flex: 1;
    background: #262626;
}

.iconcol {
    width: 42px;
    border: 1px solid #3a3a3a;
    border-width: 0 3px 0 2px;
}

.iconbox {
    display: flex;
    flex-direction: column;
    align-items: center;
    gap: 12px;
    height: 69px;
    border-bottom: 1px solid #3a3a3a;
}

.iconbox .grip {
    margin: 4px 0 -8px;
}

.panels {
    display: flex;
    flex-direction: column;
    width: 285px;
    border-right: 1px solid #383838;
}

.panel {
    display: flex;
    flex-direction: column;
    border-bottom: 3px solid #3d3d3d;
}

.ptabs {
    display: flex;
    height: 28px;
    background: #424242;
}

.ptabs a {
    padding: 5px 8px 0;
    border-right: 1px solid #383838;
    border-bottom: 1px solid #383838;
    color: #a0a0a0;
}

.ptabs .on {
    padding-left: 10px;
    border-bottom-color: #535353;
    color: #f0f0f0;
    background: #535353;
}

.ptabs svg {
    width: 10px;
    height: 8px;
    margin: 10px 5px 0 auto;
}

.color {
    height: 166px;
}

.picker {
    display: flex;
    padding: 7px 16px 0 9px;
}

.picker .swatch {
    margin: 3px 6px 0 0;
}

.field {
    flex: 1;
    height: 107px;
    overflow: hidden;
    position: relative;
    background: linear-gradient(to bottom, transparent, #000), linear-gradient(to right, #fff, #f00);
}

.field i {
    position: absolute;
    left: -6px;
    bottom: -6px;
    width: 12px;
    height: 12px;
    border: 1px solid #fff;
    border-radius: 50%;
}

.hue {
    position: relative;
    width: 19px;
    margin-left: 17px;
    background: linear-gradient(#f00, #f0f 17%, #00f 33%, #0ff 50%, #0f0 67%, #ff0 83%, #f00);
}

.hue::before {
    content: "";
    position: absolute;
    left: -10px;
    bottom: -4px;
    border: 4px solid transparent;
    border-left: 7px solid #e8e8e8;
    border-right: 0;
}

.props {
    flex: 367;
}

.none {
    height: 34px;
    padding: 10px 11px 0;
    border-bottom: 1px solid #3d3d3d;
    font-size: 13px;
    color: #858585;
}

.scroll {
    flex: 1;
    border-right: 17px solid #4a4a4a;
}

.layers {
    flex: 421;
    border-bottom: 1px solid #383838;
}

.layers .scroll {
    background: #4d4d4d;
}

.lrow {
    display: flex;
    align-items: center;
    height: 29px;
    padding-left: 3px;
    border-bottom: 1px solid #424242;
    font-size: 13px;
    color: #909090;
}

.filter {
    height: 33px;
    padding-top: 5px;
}

.locks {
    height: 32px;
    padding: 0 0 4px 7px;
    border: 0;
}

.licons {
    display: flex;
    gap: 10px;
    margin: 0 16px;
    color: #aaa;
}

.licons svg {
    width: 14px;
    height: 14px;
}

.licons.tight {
    gap: 8px;
    margin: 0 8px 0 9px;
}

.toggle {
    width: 9px;
    height: 18px;
    border-radius: 5px;
    background: radial-gradient(circle at 50% 4px, #aaa 4px, #454545 5px);
}

.blend label {
    margin: 0 5px 0 8px;
}

.locks .num {
    margin-left: 4px;
}

.num {
    display: flex;
    align-items: center;
    width: 55px;
    height: 19px;
    border: 1px solid #606060;
    border-radius: 3px;
}

.num input {
    width: 38px;
    height: 17px;
    border: 2px solid #505050;
    border-right: 1px solid #606060;
    background: #454545;
}

.num svg {
    width: 8px;
    height: 6px;
    margin: 0 auto;
    color: #707070;
}

.lfoot {
    display: flex;
    align-items: center;
    justify-content: flex-end;
    gap: 13px;
    height: 26px;
    padding-right: 27px;
    border-top: 1px solid #3d3d3d;
    color: #aaa;
}

.lfoot svg {
    width: 14px;
    height: 14px;
}

.lfoot em {
    width: 14px;
    font-size: 13px;
    text-align: center;
}

/* preferences */
.dialog {
    position: absolute;
    left: 349px;
    top: 192px;
    width: 1160px;
    border: 1px solid #3c3c3c;
    border-radius: 8px;
    font-size: 14px;
    line-height: 20px;
    color: #dcdcdc;
    background: #535353;
    box-shadow: 0 6px 24px rgba(0, 0, 0, .5);
}

.dtitle {
    display: flex;
    align-items: center;
    height: 25px;
    padding: 0 11px 2px 8px;
    border-radius: 8px 8px 0 0;
    background: #444;
}

.dtitle h1 {
    flex: 1;
    font-size: 14px;
    font-weight: normal;
    color: #f0f0f0;
}

.dsearch {
    width: 275px;
    height: 22px;
    padding-left: 9px;
    border: 1px solid #666;
    font-size: 12px;
}

.dsearch::placeholder {
    color: #8a8a8a;
    font-style: italic;
}

.dclose {
    margin-left: 20px;
    color: #e6e6e6;
}

.dbody {
    display: flex;
    padding: 11px 9px 8px 9px;
}

.cats {
    width: 180px;
    height: 566px;
    margin-top: 2px;
    border: 1px solid #424242;
    font-size: 13px;
    color: #f0f0f0;
}

.cats li {
    padding-left: 5px;
}

.cats .on {
    background: #6a6a6a;
}

.sections {
    flex: 1;
    margin: 0 8px 0 9px;
    display: flex;
    flex-direction: column;
    gap: 7px;
}

fieldset {
    min-width: 0;
    margin: 0;
    padding: 0 0 0 7px;
    border: 1px solid #444;
}

legend {
    margin-left: 7px;
    padding: 0 7px;
    color: #f0f0f0;
}

.look { height: 312px; }
.present { height: 121px; }
.opts { height: 78px; }

.themes {
    display: flex;
    align-items: center;
    margin-top: 6px;
    height: 34px;
}

.themes > span:first-child {
    width: 77px;
    padding-left: 2px;
}

.themes label {
    width: 98px;
}

.chips {
    display: flex;
    align-items: center;
    gap: 4px;
    width: 161px;
}

.chip {
    width: 34px;
    height: 34px;
    border: 2px solid transparent;
    background-clip: padding-box;
}

.chip.on { border-color: #1fb6ff; }
.c1 { background-color: #323232; }
.c2 { background-color: #535353; }
.c3 { background-color: #b8b8b8; }
.c4 { background-color: #f0f0f0; }

.check {
    display: flex;
    align-items: center;
    gap: 7px;
    height: 20px;
    color: #f0f0f0;
}

.check input {
    appearance: none;
    width: 13px;
    height: 13px;
    border: 1px solid #8a8a8a;
    border-radius: 3px;
    background: #484848;
}

.check input:checked {
    border-color: #ddd;
    background: #ddd;
    display: grid;
    place-items: center;
}

.check input:checked::before {
    content: "";
    width: 4px;
    height: 8px;
    border: solid #333;
    border-width: 0 2px 2px 0;
    transform: rotate(40deg);
}

.neutral {
    margin-top: 8px;
}

.about {
    display: flex;
    gap: 13px;
    margin: 7px 0 0 206px;
}

.about svg {
    margin-top: 10px;
}

.about p {
    font-size: 15px;
    line-height: 15px;
    white-space: nowrap;
}

.about a {
    display: block;
    margin-top: 2px;
    line-height: 16px;
    color: #4aa3f5;
    text-decoration: underline;
}

.modes {
    display: grid;
    grid-template-columns: 144px 174px 99px;
    column-gap: 8px;
    row-gap: 2px;
    margin-top: 5px;
}

.modes label, .pgrid label:first-child {
    text-align: right;
    white-space: nowrap;
}

.modes label, .themes > span:first-child {
    font-size: 15px;
}

.colhead {
    text-align: center;
}

.note {
    display: flex;
    gap: 13px;
    margin-top: 4px;
}

.note svg {
    margin-top: 5px;
}

.n1 { margin-left: 274px; }
.n2 { margin: 6px 0 0 242px; }

.pgrid {
    display: flex;
    align-items: center;
    height: 22px;
    margin-top: 4px;
}

.pgrid label:first-child {
    width: 143px;
    margin-right: 5px;
}

.pgrid .open + label {
    width: 225px;
    margin-right: 6px;
    text-align: right;
}

.pgrid.second {
    height: 20px;
    margin-top: 6px;
}

.pgrid .fit {
    margin-left: 201px;
}

.open {
    border-color: #0a64d8;
    background: #383838;
}

.drop {
    position: absolute;
    left: 0;
    top: 20px;
    z-index: 1;
    width: 100px;
    border: 1px solid #0078d7;
    font-family: "Liberation Sans", "Noto Sans CJK KR", sans-serif;
    font-size: 12px;
    line-height: 17px;
    color: #000;
    background: #fff;
    box-shadow: 3px 3px 3px rgba(0, 0, 0, .5);
}

.drop li {
    padding-left: 4px;
}

.drop .on {
    font-size: 11px;
    color: #fff;
    background: #0078d7;
}

.crow {
    display: flex;
    gap: 32px;
    margin-top: 4px;
}

.crow + .crow {
    margin-top: 6px;
}

.actions {
    display: flex;
    flex-direction: column;
    align-items: flex-start;
    gap: 8px;
    width: 79px;
    margin-top: 3px;
}

.pill {
    width: 66px;
    height: 26px;
    border: 1px solid #787878;
    border-radius: 13px;
    color: #f0f0f0;
}

.pill.primary {
    border: 2px solid #bbb;
}

.pill.wide {
    width: 77px;
}

/* windows taskbar */
.taskbar {
    display: flex;
    align-items: center;
    justify-content: flex-end;
    height: 49px;
    margin: 0 2px;
    border-top: 1px solid #9aa4b4;
    border-bottom: 1px solid #666;
    color: #1a1a1a;
    background: linear-gradient(90deg, #e9f0f8, #dfe9f8 15%, #d3def8 33%, #cfe0f9 42%, #d7dcf1 55%, #dfe6f5 72%, #e4eefa);
}

.apps {
    flex: 1;
    display: flex;
    align-items: center;
    justify-content: center;
    padding-left: 345px;
    margin-right: 4px;
}

.tsearch {
    display: flex;
    align-items: center;
    width: 218px;
    height: 31px;
    margin: 0 12px 0 14px;
    padding: 0 4px 0 10px;
    border: 1px solid #c3cde0;
    border-radius: 16px;
    background: #f4f7fd;
}

.tsearch input {
    flex: 1;
    min-width: 0;
    margin-left: 10px;
    font-size: 14px;
}

.tsearch input::placeholder {
    color: #555;
}

.pharaoh { width: 42px; height: 26px; }

.pinned {
    display: flex;
    gap: 20px;
}

.task {
    display: flex;
    align-items: center;
    gap: 8px;
    position: relative;
    height: 38px;
    padding: 0 6px;
    border: 1px solid transparent;
    border-radius: 4px;
}

.task svg { width: 23px; height: 22px; }

.task::after {
    content: "";
    position: absolute;
    left: 15px;
    bottom: 0;
    width: 6px;
    height: 3px;
    border-radius: 2px;
    background: #808590;
}

.run {
    margin: 0 6px 0 12px;
}

.active.task {
    border-color: #d0d8e8;
    background: #edf1fb;
}

.active.task::after {
    left: 10px;
    width: 16px;
    background: #0a78d4;
}

.tray {
    display: flex;
    align-items: center;
    padding-right: 21px;
}

.t12 { width: 12px; height: 16px; margin-right: 20px; }
.t14 { width: 14px; height: 18px; margin-right: 18px; }
.t18 { width: 18px; height: 16px; }
.t18.v { margin-left: 6px; }
.t14.b { margin: 0; }

.ime {
    margin-right: 17px;
    font-family: Lato, sans-serif;
    font-size: 18px;
    font-weight: 300;
}

.clock {
    min-width: 104px;
    margin: 0 9px 0 14px;
    text-align: right;
}

.status {
    display: flex;
    align-items: center;
    justify-content: space-between;
    height: 21px;
    padding-left: 2px;
    border-bottom: 1px solid #f2f2f2;
    font-size: 13px;
    background: #e3e4e6;
}

.devices {
    display: flex;
    align-items: center;
    gap: 7px;
}

.devices i {
    width: 1px;
    height: 16px;
    background: #aaa;
}

.devices .g {
    margin-left: 5px;
}
```
